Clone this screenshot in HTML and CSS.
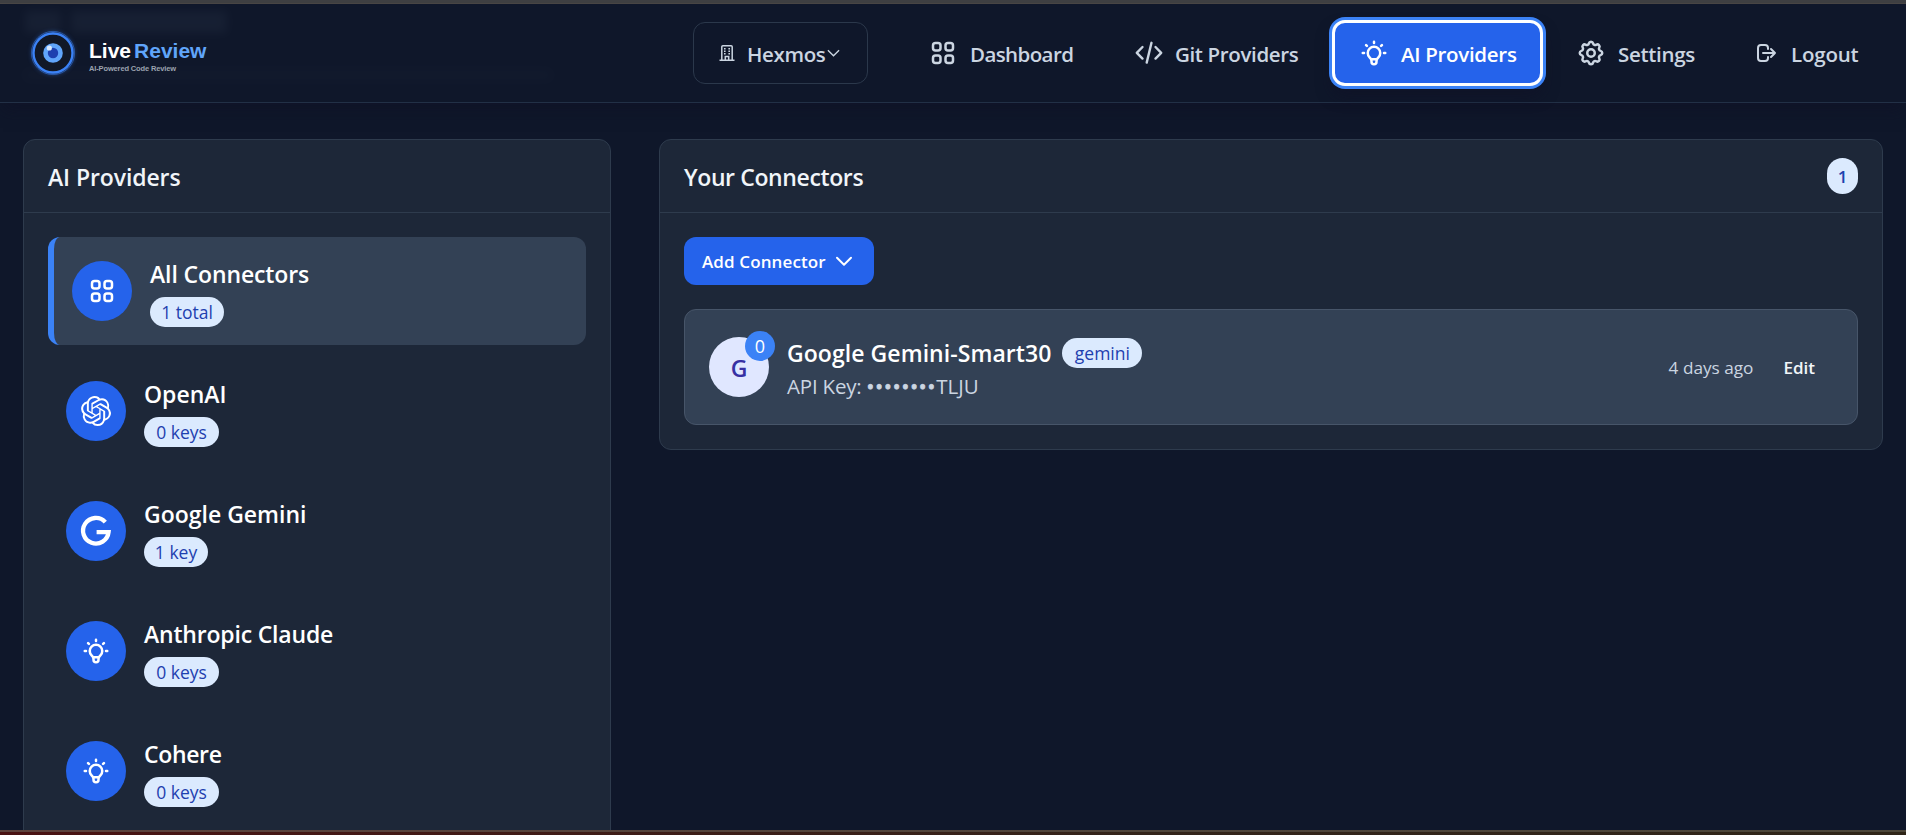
FILE: index.html
```
<!DOCTYPE html>
<html lang="en">
<head>
<meta charset="utf-8">
<title>LiveReview – AI Providers</title>
<link rel="stylesheet" href="styles.css">
</head>
<body>
<svg class="defs" aria-hidden="true">
  <symbol id="i-grid" viewBox="0 0 24 24"><path d="M4 6a2 2 0 0 1 2-2h2a2 2 0 0 1 2 2v2a2 2 0 0 1-2 2H6a2 2 0 0 1-2-2zM14 6a2 2 0 0 1 2-2h2a2 2 0 0 1 2 2v2a2 2 0 0 1-2 2h-2a2 2 0 0 1-2-2zM4 16a2 2 0 0 1 2-2h2a2 2 0 0 1 2 2v2a2 2 0 0 1-2 2H6a2 2 0 0 1-2-2zM14 16a2 2 0 0 1 2-2h2a2 2 0 0 1 2 2v2a2 2 0 0 1-2 2h-2a2 2 0 0 1-2-2z"/></symbol>
  <symbol id="i-bulb" viewBox="0 0 24 24"><path d="M9.663 17h4.673M12 3v1m6.364 1.636l-.707.707M21 12h-1M4 12H3m3.343-5.657l-.707-.707m2.828 9.900a5 5 0 1 1 7.072 0l-.548.547A3.374 3.374 0 0 0 14 18.469V19a2 2 0 1 1-4 0v-.531c0-.895-.356-1.754-.988-2.386z"/></symbol>
</svg>
<div class="topline"></div>
<header class="header">
  <div class="under" aria-hidden="true"><div class="under-title"><i></i><b></b></div><div class="under-line"></div></div>
  <div class="brand">
    <svg class="logo" viewBox="0 0 48 48">
      <circle cx="24" cy="24" r="21.6" fill="none" stroke="#3b82f6" stroke-opacity=".5"/>
      <circle cx="24" cy="24" r="19.5" fill="#111827" stroke="#3b82f6" stroke-width="2.4"/>
      <circle cx="24" cy="24" r="9.8" fill="#60a5fa"/>
      <circle cx="24" cy="24" r="5.2" fill="#1e40af"/>
      <circle cx="20.3" cy="19" r="2.6" fill="#dbeafe"/>
    </svg>
    <div class="wordmark">
      <div class="name"><span class="live">Live</span><span class="review">Review</span></div>
      <div class="tagline">AI-Powered Code Review</div>
    </div>
  </div>
  <nav class="nav">
    <a class="org">
      <svg class="org-icon" viewBox="0 0 16 16"><path d="M2.800 15V1.800q0-1.100 1.100-1.100h8.200q1.100 0 1.100 1.100V15M.5 15.300h15M6.300 15v-3.400h3.400V15M5 3.800h1.600M9.400 3.800H11M5 6.300h1.600M9.400 6.300H11M5 8.800h1.600M9.400 8.800H11"/></svg>
      <span class="t-org">Hexmos</span>
      <svg class="org-chev" viewBox="0 0 14 8"><path d="M1 1l6 6 6-6"/></svg>
    </a>
    <a class="link dash"><svg class="ic"><use href="#i-grid"/></svg><span class="t-dash">Dashboard</span></a>
    <a class="link git"><svg class="ic" viewBox="0 0 30 30"><path d="M8.500 9L2.800 14.800l5.700 5.800M21.500 9l5.700 5.800-5.700 5.800M17.500 4.800l-4.800 19.800"/></svg><span class="t-git">Git Providers</span></a>
    <a class="link ai"><svg class="ic"><use href="#i-bulb"/></svg><span class="t-ai">AI Providers</span></a>
    <a class="link set"><svg class="ic" viewBox="0 0 24 24"><path d="M10.325 4.317c.426-1.756 2.924-1.756 3.350 0a1.724 1.724 0 0 0 2.573 1.066c1.543-.94 3.310.826 2.370 2.370a1.724 1.724 0 0 0 1.065 2.572c1.756.426 1.756 2.924 0 3.350a1.724 1.724 0 0 0-1.066 2.573c.94 1.543-.826 3.310-2.370 2.370a1.724 1.724 0 0 0-2.572 1.065c-.426 1.756-2.924 1.756-3.350 0a1.724 1.724 0 0 0-2.573-1.066c-1.543.94-3.310-.826-2.370-2.370a1.724 1.724 0 0 0-1.065-2.572c-1.756-.426-1.756-2.924 0-3.350a1.724 1.724 0 0 0 1.066-2.573c-.94-1.543.826-3.310 2.370-2.370.996.608 2.296.07 2.572-1.065z"/><circle cx="12" cy="12" r="3"/></svg><span class="t-set">Settings</span></a>
    <a class="link out"><svg class="ic" viewBox="0 0 24 24"><path d="M17 16l4-4m0 0l-4-4m4 4H9m5 4v1a3 3 0 0 1-3 3H7a3 3 0 0 1-3-3V7a3 3 0 0 1 3-3h4a3 3 0 0 1 3 3v1"/></svg><span class="t-out">Logout</span></a>
  </nav>
</header>
<main class="main">
  <section class="card providers">
    <h2 class="card-head"><span class="h-ai">AI Providers</span></h2>
    <div class="list">
      <div class="item active"><span class="disc"><svg class="ic"><use href="#i-grid"/></svg></span><div class="info"><div class="title"><span class="n-all">All Connectors</span></div><span class="pill p-total">1 total</span></div></div>
      <div class="item"><span class="disc"><svg class="brandic" viewBox="0 0 24 24"><path d="M22.282 9.821a5.985 5.985 0 0 0-.516-4.910 6.046 6.046 0 0 0-6.510-2.900A6.065 6.065 0 0 0 4.981 4.180a5.985 5.985 0 0 0-3.998 2.900 6.046 6.046 0 0 0 .743 7.097 5.980 5.980 0 0 0 .510 4.911 6.051 6.051 0 0 0 6.515 2.900A5.985 5.985 0 0 0 13.260 24a6.056 6.056 0 0 0 5.772-4.206 5.990 5.990 0 0 0 3.997-2.900 6.056 6.056 0 0 0-.747-7.073zM13.260 22.430a4.476 4.476 0 0 1-2.876-1.040l.141-.081 4.779-2.758a.795.795 0 0 0 .392-.681v-6.737l2.020 1.168a.071.071 0 0 1 .038.052v5.583a4.504 4.504 0 0 1-4.494 4.494zM3.600 18.304a4.470 4.470 0 0 1-.535-3.014l.142.085 4.783 2.759a.771.771 0 0 0 .780 0l5.843-3.369v2.332a.080.080 0 0 1-.033.062L9.740 19.950a4.500 4.500 0 0 1-6.140-1.646zM2.340 7.896a4.485 4.485 0 0 1 2.366-1.973V11.600a.766.766 0 0 0 .388.676l5.815 3.355-2.020 1.168a.076.076 0 0 1-.071 0l-4.830-2.786A4.504 4.504 0 0 1 2.340 7.872zm16.597 3.855l-5.833-3.387L15.119 7.200a.076.076 0 0 1 .071 0l4.830 2.791a4.494 4.494 0 0 1-.676 8.105v-5.678a.790.790 0 0 0-.407-.667zm2.010-3.023l-.141-.085-4.774-2.782a.776.776 0 0 0-.785 0L9.409 9.230V6.897a.066.066 0 0 1 .028-.061l4.830-2.787a4.500 4.500 0 0 1 6.680 4.660zm-12.640 4.135l-2.020-1.164a.080.080 0 0 1-.038-.057V6.075a4.500 4.500 0 0 1 7.375-3.453l-.142.080L8.704 5.460a.795.795 0 0 0-.393.681zm1.097-2.365l2.602-1.500 2.607 1.500v2.999l-2.597 1.500-2.607-1.500z"/></svg></span><div class="info"><div class="title"><span class="n-open">OpenAI</span></div><span class="pill p-keys">0 keys</span></div></div>
      <div class="item"><span class="disc"><svg class="gic" viewBox="0 0 30 30"><path d="M24.300 6.100A12.800 12.800 0 1 0 27.600 16.100H15.600"/></svg></span><div class="info"><div class="title"><span class="n-gem">Google Gemini</span></div><span class="pill p-key">1 key</span></div></div>
      <div class="item"><span class="disc"><svg class="ic"><use href="#i-bulb"/></svg></span><div class="info"><div class="title"><span class="n-ant">Anthropic Claude</span></div><span class="pill p-keys">0 keys</span></div></div>
      <div class="item"><span class="disc"><svg class="ic"><use href="#i-bulb"/></svg></span><div class="info"><div class="title"><span class="n-coh">Cohere</span></div><span class="pill p-keys">0 keys</span></div></div>
    </div>
  </section>
  <section class="card connectors">
    <h2 class="card-head"><span class="h-conn">Your Connectors</span><span class="count">1</span></h2>
    <div class="body">
      <button class="add"><span class="t-add">Add Connector</span><svg class="add-chev" viewBox="0 0 18 11"><path d="M2 1.800l7 7 7-7"/></svg></button>
      <div class="conn">
        <div class="avatar">G<span class="badge">0</span></div>
        <div class="conn-info">
          <div class="conn-title"><span class="t-conn">Google Gemini-Smart30</span><span class="pill p-gem">gemini</span></div>
          <div class="api"><span class="t-api">API Key: </span><span class="dots">••••••••</span>TLJU</div>
        </div>
        <span class="ago">4 days ago</span>
        <span class="edit">Edit</span>
      </div>
    </div>
  </section>
</main>
<div class="bottomline"></div>
</body>
</html>
```
FILE: styles.css
```
* { box-sizing: border-box; }
body {
  margin: 0;
  width: 1906px;
  height: 835px;
  overflow: hidden;
  display: flex;
  flex-direction: column;
  background: #0f172a;
  color: #fff;
  font-family: "Open Sans", "Noto Sans", sans-serif;
}
.defs { display: none; }
svg { display: block; flex: none; overflow: visible; }
.ic { width: 30px; height: 30px; fill: none; stroke: currentColor; stroke-width: 2; stroke-linecap: round; stroke-linejoin: round; }
.topline { height: 4px; flex: none; background: #3f4043; border-bottom: 1px solid #4a4746; }
.header {
  position: relative;
  height: 99px;
  flex: none;
  display: flex;
  justify-content: space-between;
  align-items: flex-start;
  background: #0f172a;
  border-bottom: 1px solid #223046;
  box-shadow: 0 10px 15px -3px rgba(15, 15, 38, .5);
}
/* page heading showing through the frosted header */
.under { position: absolute; inset: 0; overflow: hidden; opacity: .09; }
.under-title { display: flex; gap: 10px; padding: 7px 0 0 25px; filter: blur(5px); }
.under-title i, .under-title b { display: block; height: 22px; background: #64748b; }
.under-title i { width: 36px; }
.under-title b { width: 156px; }
.under-line { width: 530px; height: 12px; margin: 36px 0 0 23px; background: #64748b; opacity: .4; filter: blur(6px); }
.brand { position: relative; display: flex; padding: 25px 0 0 29px; }
.logo { width: 48px; height: 48px; filter: drop-shadow(0 0 2px rgba(59, 130, 246, .45)); }
.wordmark { margin-left: 12px; padding-top: 10px; font-family: "Liberation Sans", Arial, sans-serif; font-weight: 700; }
.name { display: flex; gap: 3px; font-size: 21px; line-height: 24px; }
.review { color: #60a5fa; }
.tagline { font-size: 7.500px; letter-spacing: -.14px; line-height: 10px; color: #9ca3af; margin-top: 1px; white-space: nowrap; }
.nav { position: relative; display: flex; font-size: 20.500px; font-weight: 600; color: #cbd5e1; padding: 16px 22px 0 0; white-space: nowrap; }
.org {
  width: 175px; height: 62px; margin-top: 2px;
  display: flex; align-items: center;
  padding-left: 25px;
  border: 1px solid #2b384b; border-radius: 12px;
}
.org-icon { width: 16px; height: 16px; fill: none; stroke: currentColor; stroke-width: 1.500; }
.org span { margin-left: 12px; }
.org-chev { width: 13px; height: 8px; margin-left: 2px; fill: none; stroke: currentColor; stroke-width: 1.500; }
.link { height: 66px; display: flex; align-items: center; }
.link span { margin-left: 12px; }
.nav span { padding-top: 1px; }
.t-org { letter-spacing: -.36px; }
.t-dash { letter-spacing: -.6px; }
.t-git { letter-spacing: -.36px; }
.t-ai { letter-spacing: -.3px; }
.t-set { letter-spacing: -.3px; }
.t-out { letter-spacing: -.2px; }
.dash { margin-left: 60px; width: 206px; }
.git { width: 198px; }
.git .ic { stroke-width: 2.400; }
.git span { margin-left: 11px; }
.ai {
  width: 211px; padding-left: 24px;
  color: #fff; background: #2563eb;
  border: 3px solid #fff; border-radius: 13px;
  box-shadow: 0 0 0 3px #3b82f6, 0 10px 15px rgba(15, 15, 38, .5);
}
.set { margin-left: 33px; width: 178px; }
.out { width: 130px; }
.out .ic { width: 24px; height: 24px; }
.out span { margin-left: 13px; }
.main { height: 727px; flex: none; display: flex; align-items: flex-start; gap: 48px; padding: 36px 23px 0; overflow: hidden; }
.card { background: #1d2738; border: 1px solid #2e3b4d; border-radius: 12px; }
.providers { width: 588px; height: 760px; flex: none; }
.connectors { flex: 1; height: 311px; }
.card-head {
  height: 73px; margin: 0; padding: 2px 24px 0;
  display: flex; align-items: center; justify-content: space-between;
  border-bottom: 1px solid #2e3b4d;
  font-size: 23px; font-weight: 600; color: #f1f5f9;
}
.h-ai { letter-spacing: -.1px; }
.h-conn { letter-spacing: -.38px; }
.count {
  width: 31px; height: 36px; margin-top: -2px; border-radius: 16px;
  display: flex; align-items: center; justify-content: center;
  background: #dbeafe; color: #1e40af; font-size: 17px; font-weight: 600;
}
.list { padding: 24px; display: flex; flex-direction: column; gap: 12px; }
.item { height: 108px; display: flex; align-items: center; padding: 0 18px; border-radius: 12px; }
.active { background: #334155; border-left: 6px solid #3b82f6; }
.disc { width: 60px; height: 60px; border-radius: 50%; background: #2563eb; display: flex; align-items: center; justify-content: center; }
.brandic { width: 30px; height: 30px; fill: #fff; }
.gic { width: 30px; height: 30px; fill: none; stroke: #fff; stroke-width: 4.300; }
.info { margin-left: 18px; display: flex; flex-direction: column; align-items: flex-start; }
.title { height: 42px; line-height: 39px; font-size: 23px; font-weight: 600; white-space: nowrap; }
.n-all { letter-spacing: -.12px; }
.n-ant { letter-spacing: -.19px; }
.n-coh { letter-spacing: -.35px; }
.pill {
  height: 30px; line-height: 30px; border-radius: 15px; text-align: center;
  background: #dbeafe; color: #1e40af; font-size: 17.500px; font-weight: 500; white-space: nowrap;
}
.p-total { width: 74px; }
.p-keys { width: 75px; }
.p-key { width: 64px; }
.p-gem { width: 80px; margin-left: 11px; margin-top: -1px; }
.body { padding: 24px; }
.add {
  width: 190px; height: 48px; padding: 0 0 0 18px; border: 0; border-radius: 12px;
  display: flex; align-items: center;
  background: #2563eb; color: #fff; font: 600 17px "Open Sans", sans-serif; white-space: nowrap;
}
.t-add { letter-spacing: .12px; }
.add-chev { width: 18px; height: 11px; margin-left: 9px; fill: none; stroke: #fff; stroke-width: 2; stroke-linecap: round; stroke-linejoin: round; }
.conn {
  height: 116px; margin-top: 24px; padding: 0 42px 0 24px;
  display: flex; align-items: center;
  background: #334155; border: 1px solid #475569; border-radius: 12px; white-space: nowrap;
}
.avatar {
  position: relative; width: 60px; height: 60px; border-radius: 50%;
  display: flex; align-items: center; justify-content: center;
  background: #e0e7ff; color: #3730a3; font-size: 23px; font-weight: 600; padding-top: 1px;
}
.badge {
  position: absolute; top: -6px; right: -6px; width: 30px; height: 30px; border-radius: 50%;
  display: flex; align-items: center; justify-content: center;
  background: #3b82f6; color: #fff; font-size: 18px; font-weight: 400;
}
.conn-info { flex: 1; margin-left: 18px; padding-top: 8px; }
.conn-title { display: flex; align-items: center; height: 30px; font-size: 23px; font-weight: 600; }
.t-conn { letter-spacing: .06px; }
.api { height: 36px; line-height: 36px; font-size: 20.500px; color: #cbd5e1; }
.t-api { letter-spacing: -.2px; }
.dots { letter-spacing: 1px; -webkit-text-stroke: .8px #cbd5e1; }
.ago { font-size: 17.200px; color: #cbd5e1; margin-right: 30px; padding-top: 0; }
.edit { font-size: 17px; font-weight: 600; color: #f1f5f9; }
.bottomline { position: relative; height: 5px; flex: none; background: linear-gradient(90deg, #4a1212, #33241a 60%, #2f2518); }
.bottomline::before { content: ""; display: block; height: 2px; background: linear-gradient(90deg, #5e423c, #50453a 60%, #4c4638); }
```
